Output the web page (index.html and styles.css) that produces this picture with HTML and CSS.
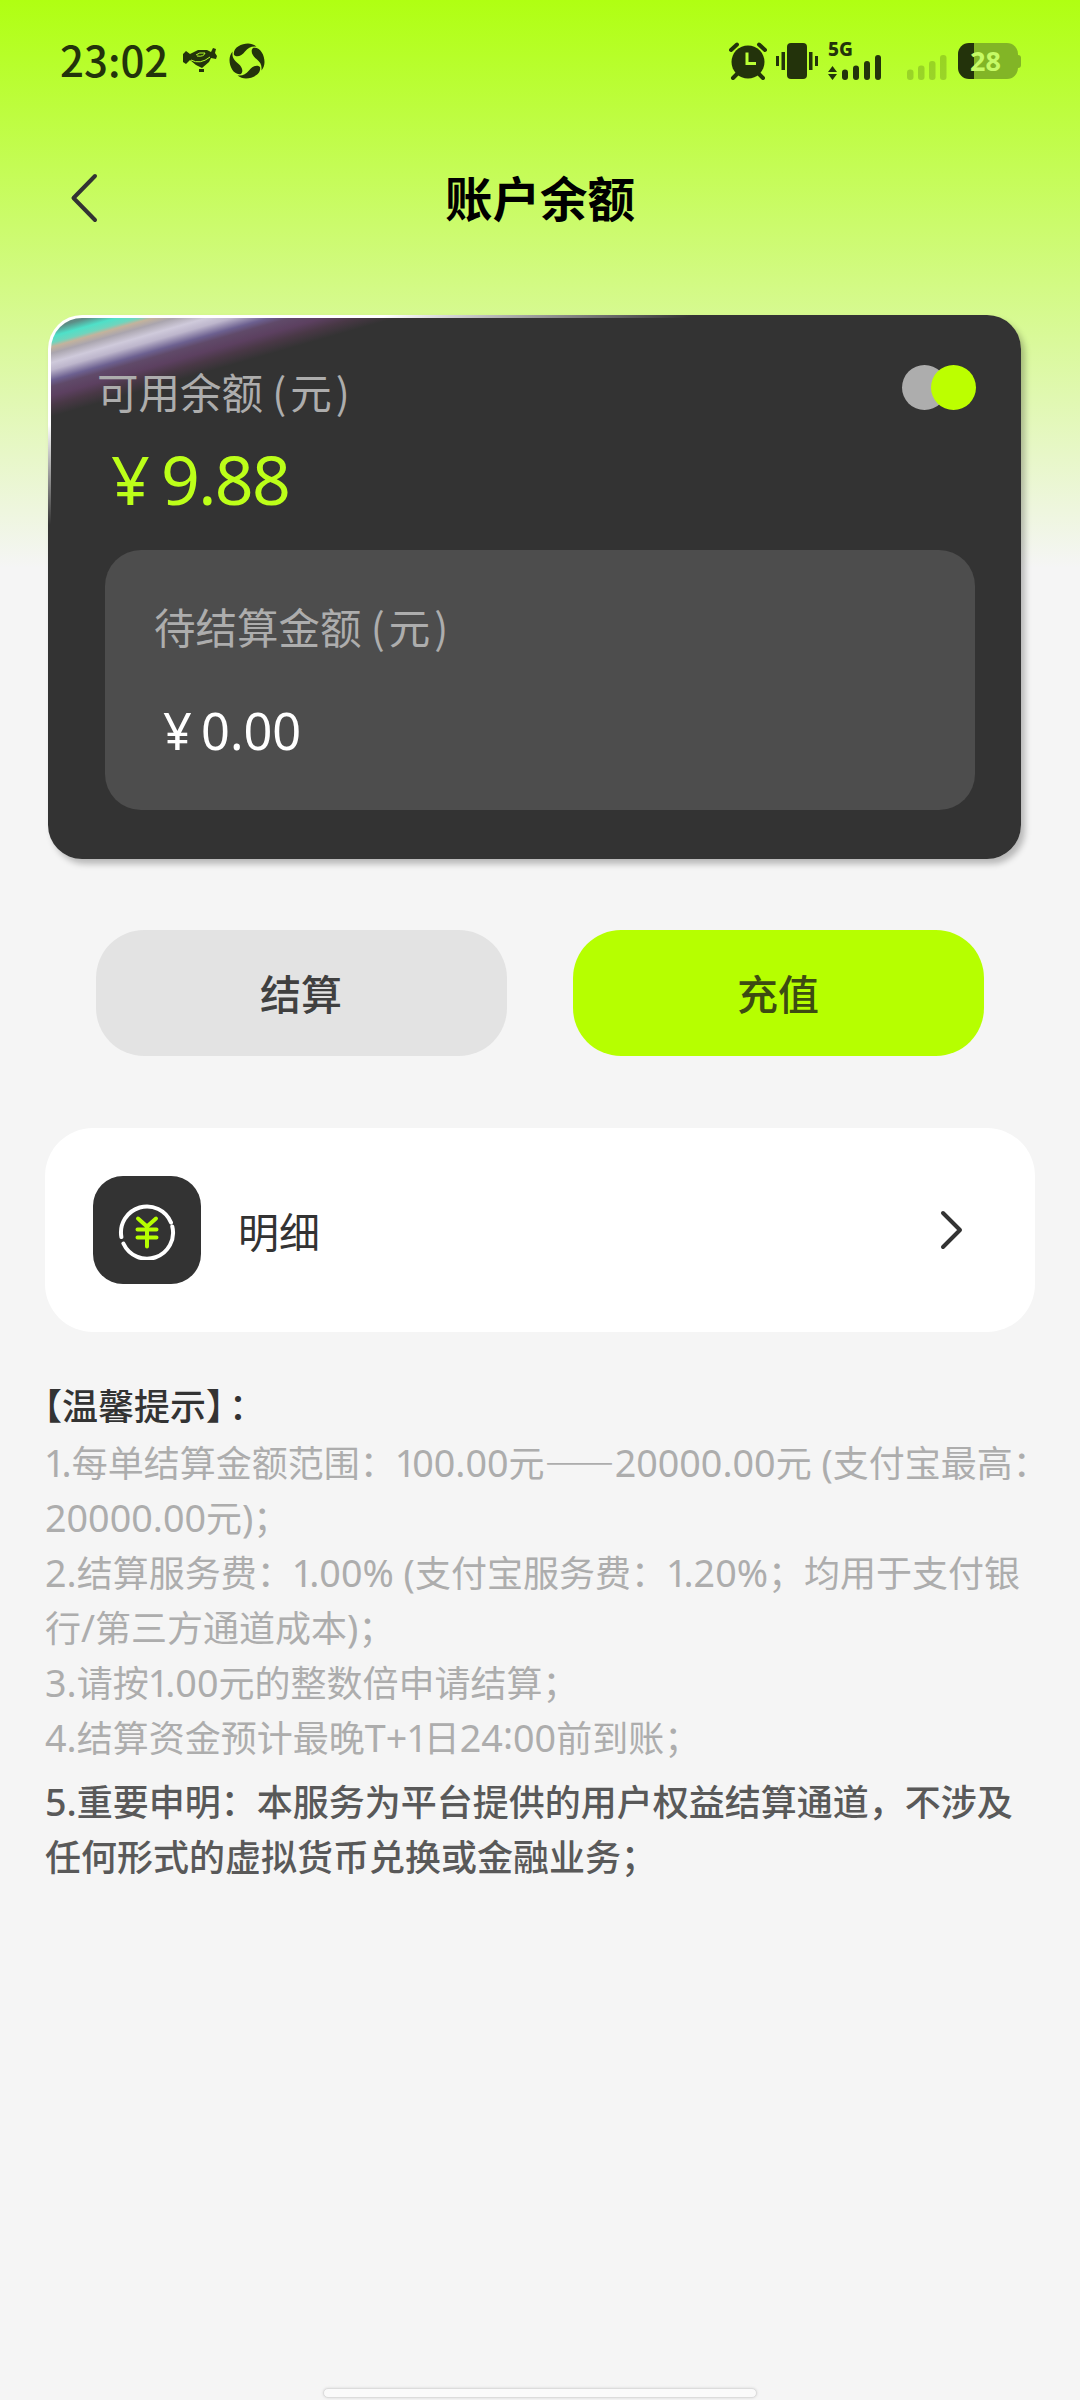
FILE: index.html
```html
<!DOCTYPE html>
<html lang="zh-CN">
<head>
<meta charset="utf-8">
<title>账户余额</title>
<link rel="stylesheet" href="styles.css">
</head>
<body>
<div class="screen">
  <header class="status">
    <span class="time">23:02</span>
    <svg class="bird" width="36" height="28" viewBox="0 0 36 28">
      <path d="M1 7L4 4L8 7L16 3L25 3L29 5L31 1L34 2L33 6L35 9L34 12L29 11L27 15L20 21L14 18L8 13L4 17L1 15Z" fill="currentColor"/>
      <path d="M9 13Q18 18 28 10M14 8Q17 5 23 6Q22 10 15 9" fill="none" stroke="#b5ff29" stroke-width="1"/>
      <path d="M17 22h5v3h-5z" fill="currentColor"/>
    </svg>
    <svg class="swirl" width="36" height="36" viewBox="-18 -18 36 36">
      <g fill="currentColor">
        <path id="blade" d="M-13 -6C-14.500 -13 -6 -17.500 1 -17.500C4 -17.500 7 -16.500 9.500 -14.500C4 -15 1.500 -13.500 -2 -9.500C-5 -5.500 -10 -3 -13 -6Z"/>
        <use href="#blade" transform="rotate(90)"/>
        <use href="#blade" transform="rotate(180)"/>
        <use href="#blade" transform="rotate(270)"/>
      </g>
    </svg>
    <svg class="alarm" width="38" height="38" viewBox="0 0 38 38">
      <circle cx="19" cy="20" r="16.500" fill="currentColor"/>
      <path d="M2 8L8 2.500M36 8L30 2.500M8 32L4 36M30 32L34 36" stroke="currentColor" stroke-width="4" stroke-linecap="round"/>
      <path d="M18 10.500V21.500H27" fill="none" stroke="#b9ff35" stroke-width="3"/>
    </svg>
    <svg class="vibrate" width="42" height="36" viewBox="0 0 42 36" fill="currentColor">
      <rect x="11" y="0" width="20" height="36" rx="4"/>
      <rect x="0" y="13" width="3" height="10"/><rect x="5.500" y="9" width="3.500" height="18"/>
      <rect x="33" y="9" width="3.500" height="18"/><rect x="39" y="13" width="3" height="10"/>
    </svg>
    <div class="mobile">
      <span class="net">5G</span>
      <svg width="54" height="25" viewBox="0 0 54 25" fill="currentColor">
        <path d="M0 17L4.500 11L9 17ZM0 19L4.500 25L9 19Z"/>
        <rect x="14" y="14.500" width="6" height="10.500" rx="3"/><rect x="25" y="10.500" width="6" height="14.500" rx="3"/>
        <rect x="36" y="6" width="6" height="19" rx="3"/><rect x="47" y="0" width="6" height="25" rx="3"/>
      </svg>
    </div>
    <svg class="weak" width="40" height="25" viewBox="0 0 40 25" fill="currentColor">
      <rect x="0" y="14.500" width="6.500" height="10.500" rx="3"/><rect x="11" y="10.500" width="6.500" height="14.500" rx="3"/>
      <rect x="22" y="6" width="6.500" height="19" rx="3"/><rect x="33" y="0" width="6.500" height="25" rx="3"/>
    </svg>
    <div class="battery"><span>28</span></div>
  </header>

  <nav class="nav">
    <svg class="back" width="30" height="50" viewBox="0 0 30 50"><path d="M25 3L3.500 25L25 47"/></svg>
    <h1>账户余额</h1>
  </nav>

  <section class="card">
    <div class="card-head">
      <h2>可用余额 <span class="unit">(元)</span></h2>
      <div class="toggle"><i class="off"></i><i class="on"></i></div>
    </div>
    <div class="amount"><span class="yen">¥</span>9.88</div>
    <div class="pending">
      <h2>待结算金额 <span class="unit">(元)</span></h2>
      <div class="sum"><span class="yen">¥</span>0.00</div>
    </div>
  </section>

  <div class="actions">
    <button class="settle">结算</button>
    <button class="recharge">充值</button>
  </div>

  <a class="detail">
    <span class="badge">
      <svg width="60" height="60" viewBox="-30 -32.500 60 60" fill="none" stroke-linecap="round" stroke-width="4">
        <path d="M-25.600 4.600A26 26 0 0 1 24 -10M25.300 -6A26 26 0 0 1 -23.600 11" stroke="#fff"/>
        <path d="M-9 -14L0 -6L9 -14M-9.500 -3H9.500M-9.500 5H9.500M0 -5V14" stroke="#b6ff00"/>
      </svg>
    </span>
    <span class="label">明细</span>
    <svg class="go" width="26" height="42" viewBox="0 0 26 42"><path d="M4 4L21 21L4 38"/></svg>
  </a>

  <section class="notes">
    <h3>【温馨提示】<span class="colon">：</span></h3>
    <p><b><i>1</i>.</b>每单结算金额范围：<b><i>1</i>00.00</b>元<u>——</u><b>20000.00</b>元<b> (</b>支付宝最高：<br><b>20000.00</b>元<b>)</b>；</p>
    <p><b>2.</b>结算服务费：<b><i>1</i>.00% (</b>支付宝服务费：<b><i>1</i>.20%</b>；均用于支付银<br>行<b>/</b>第三方通道成本<b>)</b>；</p>
    <p><b>3.</b>请按<b><i>1</i>.00</b>元的整数倍申请结算；</p>
    <p><b>4.</b>结算资金预计最晚<b>T+<i>1</i></b>日<b>24<s>:</s>00</b>前到账；</p>
    <p class="important"><b>5.</b>重要申明：本服务为平台提供的用户权益结算通道，不涉及<br>任何形式的虚拟货币兑换或金融业务；</p>
  </section>
  <div class="home"></div>
</div>
</body>
</html>
```
FILE: styles.css
```css
* { box-sizing: border-box; margin: 0; padding: 0; }
body { width: 1080px; font-family: "Noto Sans CJK SC", sans-serif; color: #333; background: #f5f5f5; }
svg { display: block; flex: none; }
.screen {
  display: flex; flex-direction: column; width: 1080px; height: 2400px; overflow: hidden;
  background: linear-gradient(#b0ff12 0, #f5f5f5 568px) no-repeat;
}

/* status bar */
.status { display: flex; align-items: center; height: 122px; padding-left: 60px; color: #23330b; flex: none; }
.time { width: 108px; margin-bottom: 4px; font-size: 42px; font-weight: 500; line-height: 60px; white-space: nowrap; }
.bird { margin-left: 14px; }
.swirl { margin-left: 11px; }
.alarm { margin-left: 464px; }
.vibrate { margin-left: 9px; }
.mobile { display: flex; flex-direction: column; width: 55px; height: 37px; margin-left: 10px; justify-content: space-between; }
.net { font: 800 19px/13px "Noto Sans", sans-serif; height: 11px; white-space: nowrap; }
.weak { margin: 12px 0 0 24px; opacity: .2; }
.battery {
  position: relative; width: 60px; height: 36px; margin-left: 11px; border-radius: 11px;
  background: linear-gradient(90deg, #23330b 16px, #82b526 16px);
  font: 700 27px/36px "Noto Sans", sans-serif; color: #c6fa66; padding-left: 12px;
}
.battery::after { content: ""; position: absolute; left: 60px; top: 12px; width: 3px; height: 13px; border-radius: 0 3px 3px 0; background: #82b526; }

/* title bar */
.nav { display: grid; grid-template-columns: 1fr auto 1fr; align-items: center; height: 152px; flex: none; }
.back { margin-left: 70px; }
.back path, .go path { fill: none; stroke: #333; stroke-width: 4; stroke-linecap: round; stroke-linejoin: round; }
.nav h1 { margin-bottom: 3px; font-size: 47.500px; line-height: 70px; font-weight: 700; color: #000; }

/* balance card */
.card {
  width: 973px; height: 544px; margin: 41px 0 0 48px; padding: 32px 43px 0 48px; flex: none;
  border: 3px solid transparent; border-radius: 34px;
  background:
    linear-gradient(164deg, #697c78 0, #5d8d86 10px, #4fe0c8 18px, #6fd5bd 24px, #c3b39d 28px, #aaa5ae 34px, #cfcadb 43px, #bdb6cc 50px, #6c6090 60px, #604a69 66px, #5c4060 75px, #493846 84px, #333 95px) padding-box,
    linear-gradient(162deg, #fff 105px, #333 200px) border-box;
  box-shadow: 4px 5px 6px rgba(0, 0, 0, .25);
}
.card h2 { font-size: 41.500px; line-height: 60px; font-weight: 400; color: #adadad; white-space: nowrap; }
.unit { letter-spacing: 4px; }
.card-head { display: flex; justify-content: space-between; height: 86px; }
.card-head h2 { margin: 11px 0 0 -2px; }
.toggle { display: flex; width: 74px; height: 44px; margin: 15px -1px 0 0; }
.toggle i { width: 45px; height: 45px; border-radius: 50%; flex: none; }
.off { background: #adadad; }
.on { background: #bcff00; margin-left: -16px; }
.amount { display: flex; height: 90px; margin-top: -2px; padding-left: 12px; font: 400 68px/90px "Noto Sans", sans-serif; letter-spacing: -1.700px; color: #bcff19; }
.yen { width: 50px; }
.pending { width: 870px; height: 260px; margin: 26px 0 0 6px; padding: 46px 0 0 49px; border-radius: 36px; background: #4d4d4d; }
.sum { display: flex; margin-top: 40px; padding-left: 9px; font: 400 50.500px/70px "Noto Sans", sans-serif; color: #fff; }
.sum .yen { width: 38px; }

/* buttons */
.actions { display: flex; gap: 66px; margin: 71px 0 0 96px; flex: none; }
.actions button { width: 411px; height: 126px; padding: 0 1px 3px 0; border: 0; border-radius: 48px; font: 500 41px/60px "Noto Sans CJK SC", sans-serif; color: #404040; }
.settle { background: #e3e3e3; }
.actions .recharge { background: #b6ff00; color: #3d4b12; }

/* details row */
.detail { display: flex; align-items: center; width: 990px; height: 204px; margin: 72px 0 0 45px; padding: 0 70px 0 48px; border-radius: 48px; background: #fff; flex: none; }
.badge { display: grid; place-items: center; width: 108px; height: 108px; border-radius: 30px; background: #333; }
.label { flex: 1; margin: 0 0 1px 37px; font-size: 41px; line-height: 60px; }

/* notes */
.notes { margin: 42px 0 0 45px; font-size: 36px; line-height: 55.100px; color: #adadad; white-space: nowrap; }
.notes h3 { margin-left: -19px; font-size: 36px; line-height: 60px; font-weight: 500; color: #333; }
.colon { margin-left: 5px; }
.notes b { font: 400 37.700px/1 "Noto Sans", sans-serif; }
.notes i { font-style: normal; margin: 0 -4px 0 -1px; }
.notes s { text-decoration: none; position: relative; top: -3px; }
.notes u { text-decoration: none; font-weight: 700; font-size: 35px; line-height: 1; }
.notes .important, .notes .important b { font-weight: 500; color: #595959; }
.important { margin-top: 8px; }

.home { width: 434px; height: 10px; margin: auto auto 2px 323px; flex: none; border-radius: 5px; border: 1px solid #dcdcdc; background: #fafafa; box-shadow: 0 0 3px rgba(0, 0, 0, .12); }
```
